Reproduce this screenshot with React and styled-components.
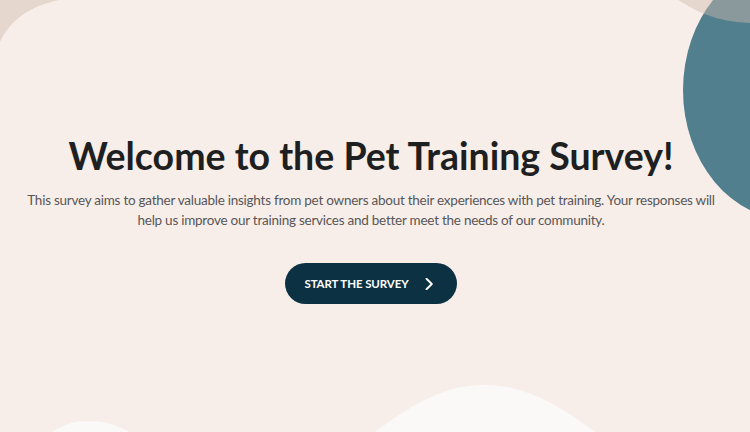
import React from "react";
import styled, { createGlobalStyle } from "styled-components";

const GlobalStyle = createGlobalStyle`
  html, body { margin: 0; padding: 0; }
  body {
    background: #f7eeea;
    font-family: "Lato", "Noto Sans", sans-serif;
    overflow: hidden;
  }
`;

const Page = styled.main`
  position: relative;
  width: 750px;
  height: 432px;
  overflow: hidden;
  background: #f7eeea;
`;

const Decor = styled.svg`
  position: absolute;
  inset: 0;
  width: 750px;
  height: 432px;
  pointer-events: none;
`;

const Hero = styled.section`
  position: relative;
  z-index: 1;
  display: flex;
  flex-direction: column;
  align-items: center;
  padding: 132px 8px 0 0;
  text-align: center;
`;

const Title = styled.h1`
  margin: 0;
  font-family: "Lato", sans-serif;
  font-weight: 700;
  font-size: 37.5px;
  line-height: 48px;
  color: #1e1f20;
`;

const Lead = styled.p`
  margin: 10px 0 0;
  max-width: 700px;
  font-family: "Lato", sans-serif;
  font-size: 13.5px;
  letter-spacing: -0.25px;
  line-height: 20px;
  color: #585656;
`;

const StartButton = styled.button`
  margin-top: 33px;
  display: flex;
  align-items: center;
  gap: 15px;
  height: 41px;
  padding: 0 23px 0 19px;
  border: none;
  border-radius: 21px;
  background: #0b3142;
  color: #ffffff;
  font-family: "Lato", sans-serif;
  font-weight: 700;
  font-size: 11.5px;
  letter-spacing: -0.1px;
  text-transform: uppercase;
  cursor: pointer;
`;

const Chevron = styled.svg`
  width: 10px;
  height: 12px;
`;

export default function App() {
  return (
    <>
      <GlobalStyle />
      <Page>
        <Decor viewBox="0 0 750 432">
          <path d="M0,0 L59,0 C30,6 10,20 0,42 Z" fill="#e5d6ce" />
          <ellipse cx="791" cy="90" rx="108" ry="130" fill="#527f8e" />
          <circle cx="752" cy="-106" r="129" fill="rgba(207,186,174,0.45)" />
          <path d="M375,432 C420,398 450,385 485,385 C522,385 555,402 595,432 Z" fill="#fbf8f8" />
          <path d="M52,432 C65,424 75,421 88,421 C102,421 115,424 130,432 Z" fill="#fbf8f8" />
        </Decor>
        <Hero>
          <Title>Welcome to the Pet Training Survey!</Title>
          <Lead>
            This survey aims to gather valuable insights from pet owners about their experiences
            with pet training. Your responses will help us improve our training services and
            better meet the needs of our community.
          </Lead>
          <StartButton type="button">
            Start the Survey
            <Chevron viewBox="0 0 10 12">
              <path d="M2.5 0.8 L7.8 6 L2.5 11.2" fill="none" stroke="#ffffff" strokeWidth="1.9" strokeLinecap="round" strokeLinejoin="round" />
            </Chevron>
          </StartButton>
        </Hero>
      </Page>
    </>
  );
}
